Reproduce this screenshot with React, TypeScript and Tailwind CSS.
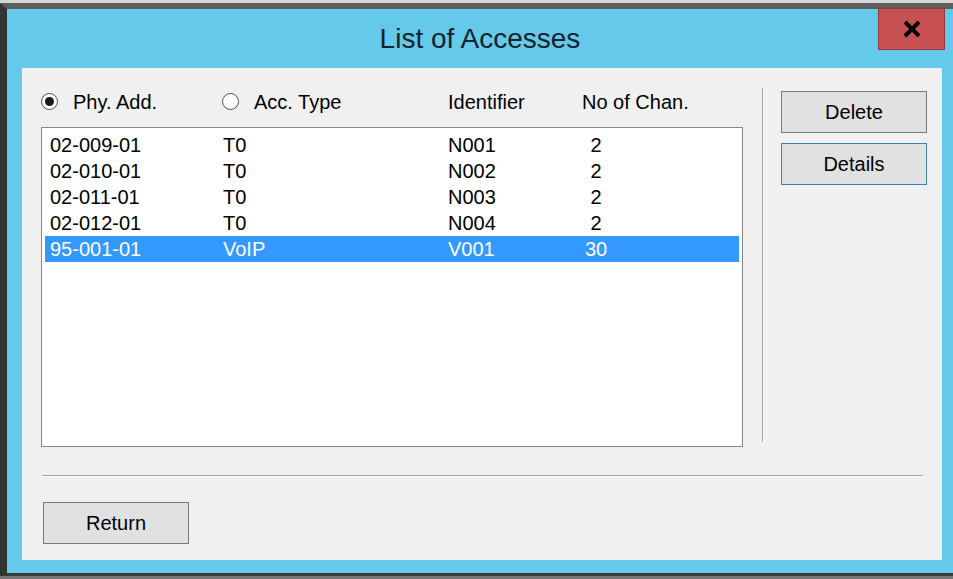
import React, { useState } from 'react';

type Access = {
  phy: string;
  type: string;
  id: string;
  chan: string;
};

const accesses: Access[] = [
  { phy: '02-009-01', type: 'T0', id: 'N001', chan: ' 2' },
  { phy: '02-010-01', type: 'T0', id: 'N002', chan: ' 2' },
  { phy: '02-011-01', type: 'T0', id: 'N003', chan: ' 2' },
  { phy: '02-012-01', type: 'T0', id: 'N004', chan: ' 2' },
  { phy: '95-001-01', type: 'VoIP', id: 'V001', chan: '30' },
];

const Radio: React.FC<{ checked: boolean; label: string; onClick: () => void }> = ({ checked, label, onClick }) => (
  <button type="button" onClick={onClick} className="flex items-center h-[23px] text-left">
    <span className="w-[17px] h-[17px] rounded-full border border-[#4d4d4d] bg-white flex items-center justify-center shrink-0">
      {checked && <span className="w-[9px] h-[9px] rounded-full bg-[#1a1a1a]" />}
    </span>
    <span className="ml-[15px] whitespace-nowrap">{label}</span>
  </button>
);

const WinButton: React.FC<{ label: string; focused?: boolean; onClick?: () => void }> = ({ label, focused, onClick }) => (
  <button
    type="button"
    onClick={onClick}
    className={`w-[146px] h-[42px] bg-[#e1e1e1] border flex items-center justify-center text-[20px] text-black ${
      focused ? 'border-[#3c7fb1]' : 'border-[#7a7a7a]'
    }`}
  >
    {label}
  </button>
);

export default function App() {
  const [sortBy, setSortBy] = useState<'phy' | 'type'>('phy');
  const [selected, setSelected] = useState(4);

  const rows = [...accesses];
  if (sortBy === 'type') rows.sort((a, b) => a.type.localeCompare(b.type));

  return (
    <div className="w-[953px] h-[579px] bg-[#d6d6d6] pt-[3px] flex flex-col font-['Liberation_Sans',Arial,sans-serif] text-black overflow-hidden">
      <div className="flex flex-col h-[573px] bg-[#65c9e9] border-t-[6px] border-l-[7px] border-b-[3px] border-t-[#5e5e5e] border-l-[#333333] border-b-[#3a3a3a]">
        {/* Title bar */}
        <div className="relative h-[59px] flex items-center justify-center shrink-0">
          <span className="text-[28px] text-[#15232b] leading-none">List of Accesses</span>
          <button
            type="button"
            className="absolute top-[-1px] right-[8px] w-[67px] h-[42px] bg-[#c75050] border border-[#943c3c] flex items-center justify-center"
          >
            <svg width="20" height="18" viewBox="0 0 20 18">
              <path d="M3 2 L17 16 M17 2 L3 16" stroke="#000" strokeWidth="4" strokeLinecap="butt" />
            </svg>
          </button>
        </div>

        {/* Client area */}
        <div className="ml-[15px] mr-[11px] h-[492px] bg-[#f0f0f0] flex flex-col shrink-0 text-[20px]">
          <div className="flex pt-[20px] h-[379px]">
            {/* List column */}
            <div className="ml-[19px] w-[702px] flex flex-col">
              <div className="mt-[2px] flex items-center h-[23px]">
                <div className="w-[181px]">
                  <Radio checked={sortBy === 'phy'} label="Phy. Add." onClick={() => setSortBy('phy')} />
                </div>
                <div className="w-[226px]">
                  <Radio checked={sortBy === 'type'} label="Acc. Type" onClick={() => setSortBy('type')} />
                </div>
                <div className="w-[134px]">Identifier</div>
                <div className="whitespace-nowrap">No of Chan.</div>
              </div>

              <div className="mt-[14px] h-[320px] bg-white border border-[#828790] px-[3px] pt-[4px]">
                {rows.map((r, i) => (
                  <div
                    key={r.phy}
                    onClick={() => setSelected(i)}
                    className={`grid grid-cols-[173px_225px_137px_1fr] h-[26px] items-center pl-[5px] leading-none whitespace-pre cursor-default ${
                      selected === i ? 'bg-[#3399ff] text-white' : ''
                    }`}
                  >
                    <span>{r.phy}</span>
                    <span>{r.type}</span>
                    <span>{r.id}</span>
                    <span>{r.chan}</span>
                  </div>
                ))}
              </div>
            </div>

            {/* Vertical separator */}
            <div className="ml-[19px] w-[2px] h-[354px] flex">
              <div className="w-px bg-[#a0a0a0]" />
              <div className="w-px bg-white" />
            </div>

            {/* Action buttons */}
            <div className="ml-[17px] mt-[3px] flex flex-col gap-[10px]">
              <WinButton label="Delete" />
              <WinButton label="Details" focused />
            </div>
          </div>

          {/* Horizontal separator */}
          <div className="mt-[28px] ml-[20px] w-[881px] flex flex-col">
            <div className="h-px bg-[#a0a0a0]" />
            <div className="h-px bg-white" />
          </div>

          <div className="mt-[25px] ml-[21px]">
            <WinButton label="Return" />
          </div>
        </div>
      </div>
      <div className="h-[3px] bg-[#777777]" />
    </div>
  );
}
